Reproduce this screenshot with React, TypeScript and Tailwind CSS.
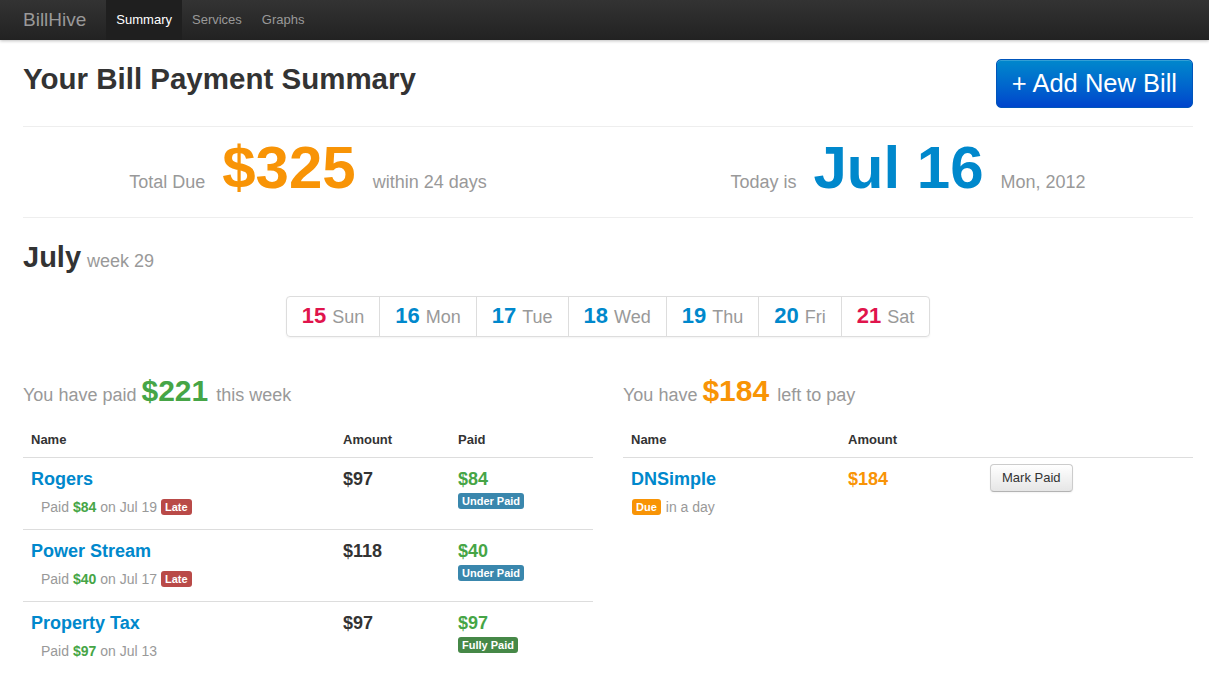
const font = { fontFamily: '"Liberation Sans", Arial, Helvetica, sans-serif' };

type Day = { num: number; name: string; weekend?: boolean };

const days: Day[] = [
  { num: 15, name: 'Sun', weekend: true },
  { num: 16, name: 'Mon' },
  { num: 17, name: 'Tue' },
  { num: 18, name: 'Wed' },
  { num: 19, name: 'Thu' },
  { num: 20, name: 'Fri' },
  { num: 21, name: 'Sat', weekend: true },
];

type PaidBill = {
  name: string;
  amount: string;
  paid: string;
  on: string;
  late?: boolean;
  status: 'under' | 'full';
};

const paidBills: PaidBill[] = [
  { name: 'Rogers', amount: '$97', paid: '$84', on: 'Jul 19', late: true, status: 'under' },
  { name: 'Power Stream', amount: '$118', paid: '$40', on: 'Jul 17', late: true, status: 'under' },
  { name: 'Property Tax', amount: '$97', paid: '$97', on: 'Jul 13', status: 'full' },
];

function Badge({ children, className }: { children: React.ReactNode; className: string }) {
  return (
    <span
      className={`inline-block rounded-[3px] px-[4px] py-[2px] text-[11px] font-bold leading-[12px] text-white ${className}`}
    >
      {children}
    </span>
  );
}

function Navbar() {
  return (
    <div className="h-[40px] bg-gradient-to-b from-[#333333] to-[#222222] shadow-[0_1px_3px_rgba(0,0,0,0.25)]">
      <div className="ml-[23px] flex h-full items-center">
        <span className="pr-[20px] text-[19px] leading-[40px] text-[#999999]">BillHive</span>
        <a className="bg-[#1f1f1f] px-[10px] text-[13px] leading-[40px] text-white">Summary</a>
        <a className="px-[10px] text-[13px] leading-[40px] text-[#999999]">Services</a>
        <a className="px-[10px] text-[13px] leading-[40px] text-[#999999]">Graphs</a>
      </div>
    </div>
  );
}

export default function App() {
  return (
    <div className="min-h-screen bg-white text-[#333333]" style={font}>
      <Navbar />

      <div className="ml-[23px] w-[1170px] pb-[20px]">
        {/* header */}
        <div className="flex items-start justify-between pt-[19px]">
          <h1 className="text-[29.5px] font-bold leading-[40px]">Your Bill Payment Summary</h1>
          <button className="h-[49px] rounded-[5px] border border-[#0055bb] bg-gradient-to-b from-[#0088cc] to-[#0044cc] px-[15px] text-[25.5px] leading-[29px] text-white shadow-[inset_0_1px_0_rgba(255,255,255,0.2)]">
            + Add New Bill
          </button>
        </div>

        <div className="mt-[18px] border-t border-[#eeeeee]" />

        {/* totals */}
        <div className="grid grid-cols-2 gap-[30px] pb-[19px] pt-[11px]">
          <div className="flex items-baseline justify-center gap-[17px]">
            <span className="text-[18px] text-[#999999]">Total Due</span>
            <span className="text-[60px] font-bold leading-[60px] text-[#f89406]">$325</span>
            <span className="text-[18px] text-[#999999]">within 24 days</span>
          </div>
          <div className="flex items-baseline justify-center gap-[17px]">
            <span className="text-[18px] text-[#999999]">Today is</span>
            <span className="text-[60px] font-bold leading-[60px] text-[#0088cc]">Jul 16</span>
            <span className="text-[18px] text-[#999999]">Mon, 2012</span>
          </div>
        </div>

        <div className="border-t border-[#eeeeee]" />

        {/* week */}
        <div className="mt-[21px] flex items-baseline gap-[6px]">
          <h2 className="text-[29px] font-bold leading-[36px]">July</h2>
          <span className="text-[18px] text-[#999999]">week 29</span>
        </div>

        <div className="mt-[21px] flex justify-center">
          <div className="flex rounded-[4px] border border-[#dddddd] shadow-[0_1px_2px_rgba(0,0,0,0.05)]">
            {days.map((d, i) => (
              <div
                key={d.num}
                className={`flex items-baseline gap-[6px] px-[15px] leading-[38px] ${i > 0 ? 'border-l border-[#dddddd]' : ''}`}
              >
                <span className={`text-[22px] font-bold ${d.weekend ? 'text-[#e0144c]' : 'text-[#0088cc]'}`}>
                  {d.num}
                </span>
                <span className="text-[18px] text-[#999999]">{d.name}</span>
              </div>
            ))}
          </div>
        </div>

        {/* bills */}
        <div className="mt-[36px] grid grid-cols-2 gap-[30px]">
          <div>
            <div className="flex items-baseline gap-[5px] leading-[36px]">
              <span className="text-[18px] text-[#999999]">You have paid</span>
              <span className="text-[30px] font-bold text-[#46a546]">$221</span>
              <span className="ml-[3px] text-[18px] text-[#999999]">this week</span>
            </div>

            <table className="mt-[10px] w-full border-collapse text-left">
              <thead>
                <tr className="border-b border-[#dddddd]">
                  <th className="w-[312px] px-[8px] py-[8px] text-[13px] font-bold leading-[18px]">Name</th>
                  <th className="w-[115px] px-[8px] py-[8px] text-[13px] font-bold leading-[18px]">Amount</th>
                  <th className="px-[8px] py-[8px] text-[13px] font-bold leading-[18px]">Paid</th>
                </tr>
              </thead>
              <tbody>
                {paidBills.map((b, i) => (
                  <tr key={b.name} className={i < paidBills.length - 1 ? 'border-b border-[#dddddd]' : ''}>
                    <td className="px-[8px] pb-[12px] pt-[7px] align-top">
                      <div className="text-[18px] font-bold leading-[28px] text-[#0088cc]">{b.name}</div>
                      <div className="mt-[4px] flex items-center gap-[4px] pl-[10px] text-[14px] leading-[20px] text-[#999999]">
                        <span>
                          Paid <b className="text-[#46a546]">{b.paid}</b> on {b.on}
                        </span>
                        {b.late && <Badge className="bg-[#b94a48]">Late</Badge>}
                      </div>
                    </td>
                    <td className="px-[8px] pt-[7px] align-top text-[18px] font-bold leading-[28px]">{b.amount}</td>
                    <td className="px-[8px] pt-[7px] align-top">
                      <div className="text-[18px] font-bold leading-[28px] text-[#46a546]">{b.paid}</div>
                      <div className="flex">
                        {b.status === 'under' ? (
                          <Badge className="bg-[#3a87ad]">Under Paid</Badge>
                        ) : (
                          <Badge className="bg-[#468847]">Fully Paid</Badge>
                        )}
                      </div>
                    </td>
                  </tr>
                ))}
              </tbody>
            </table>
          </div>

          <div>
            <div className="flex items-baseline gap-[5px] leading-[36px]">
              <span className="text-[18px] text-[#999999]">You have</span>
              <span className="text-[30px] font-bold text-[#f89406]">$184</span>
              <span className="ml-[3px] text-[18px] text-[#999999]">left to pay</span>
            </div>

            <table className="mt-[10px] w-full border-collapse text-left">
              <thead>
                <tr className="border-b border-[#dddddd]">
                  <th className="w-[217px] px-[8px] py-[8px] text-[13px] font-bold leading-[18px]">Name</th>
                  <th className="w-[142px] px-[8px] py-[8px] text-[13px] font-bold leading-[18px]">Amount</th>
                  <th className="px-[8px] py-[8px]" />
                </tr>
              </thead>
              <tbody>
                <tr>
                  <td className="px-[8px] pb-[12px] pt-[7px] align-top">
                    <div className="text-[18px] font-bold leading-[28px] text-[#0088cc]">DNSimple</div>
                    <div className="mt-[4px] flex items-center gap-[5px] pl-[1px] text-[14px] leading-[20px] text-[#999999]">
                      <Badge className="bg-[#f89406]">Due</Badge>
                      <span>in a day</span>
                    </div>
                  </td>
                  <td className="px-[8px] pt-[7px] align-top text-[18px] font-bold leading-[28px] text-[#f89406]">$184</td>
                  <td className="px-[8px] pt-[6px] align-top">
                    <button className="h-[28px] rounded-[4px] border border-[#cccccc] border-b-[#b3b3b3] bg-gradient-to-b from-white to-[#e6e6e6] px-[11px] text-[13px] leading-[18px] text-[#333333] shadow-[inset_0_1px_0_rgba(255,255,255,0.2),0_1px_2px_rgba(0,0,0,0.05)]">
                      Mark Paid
                    </button>
                  </td>
                </tr>
              </tbody>
            </table>
          </div>
        </div>
      </div>
    </div>
  );
}
